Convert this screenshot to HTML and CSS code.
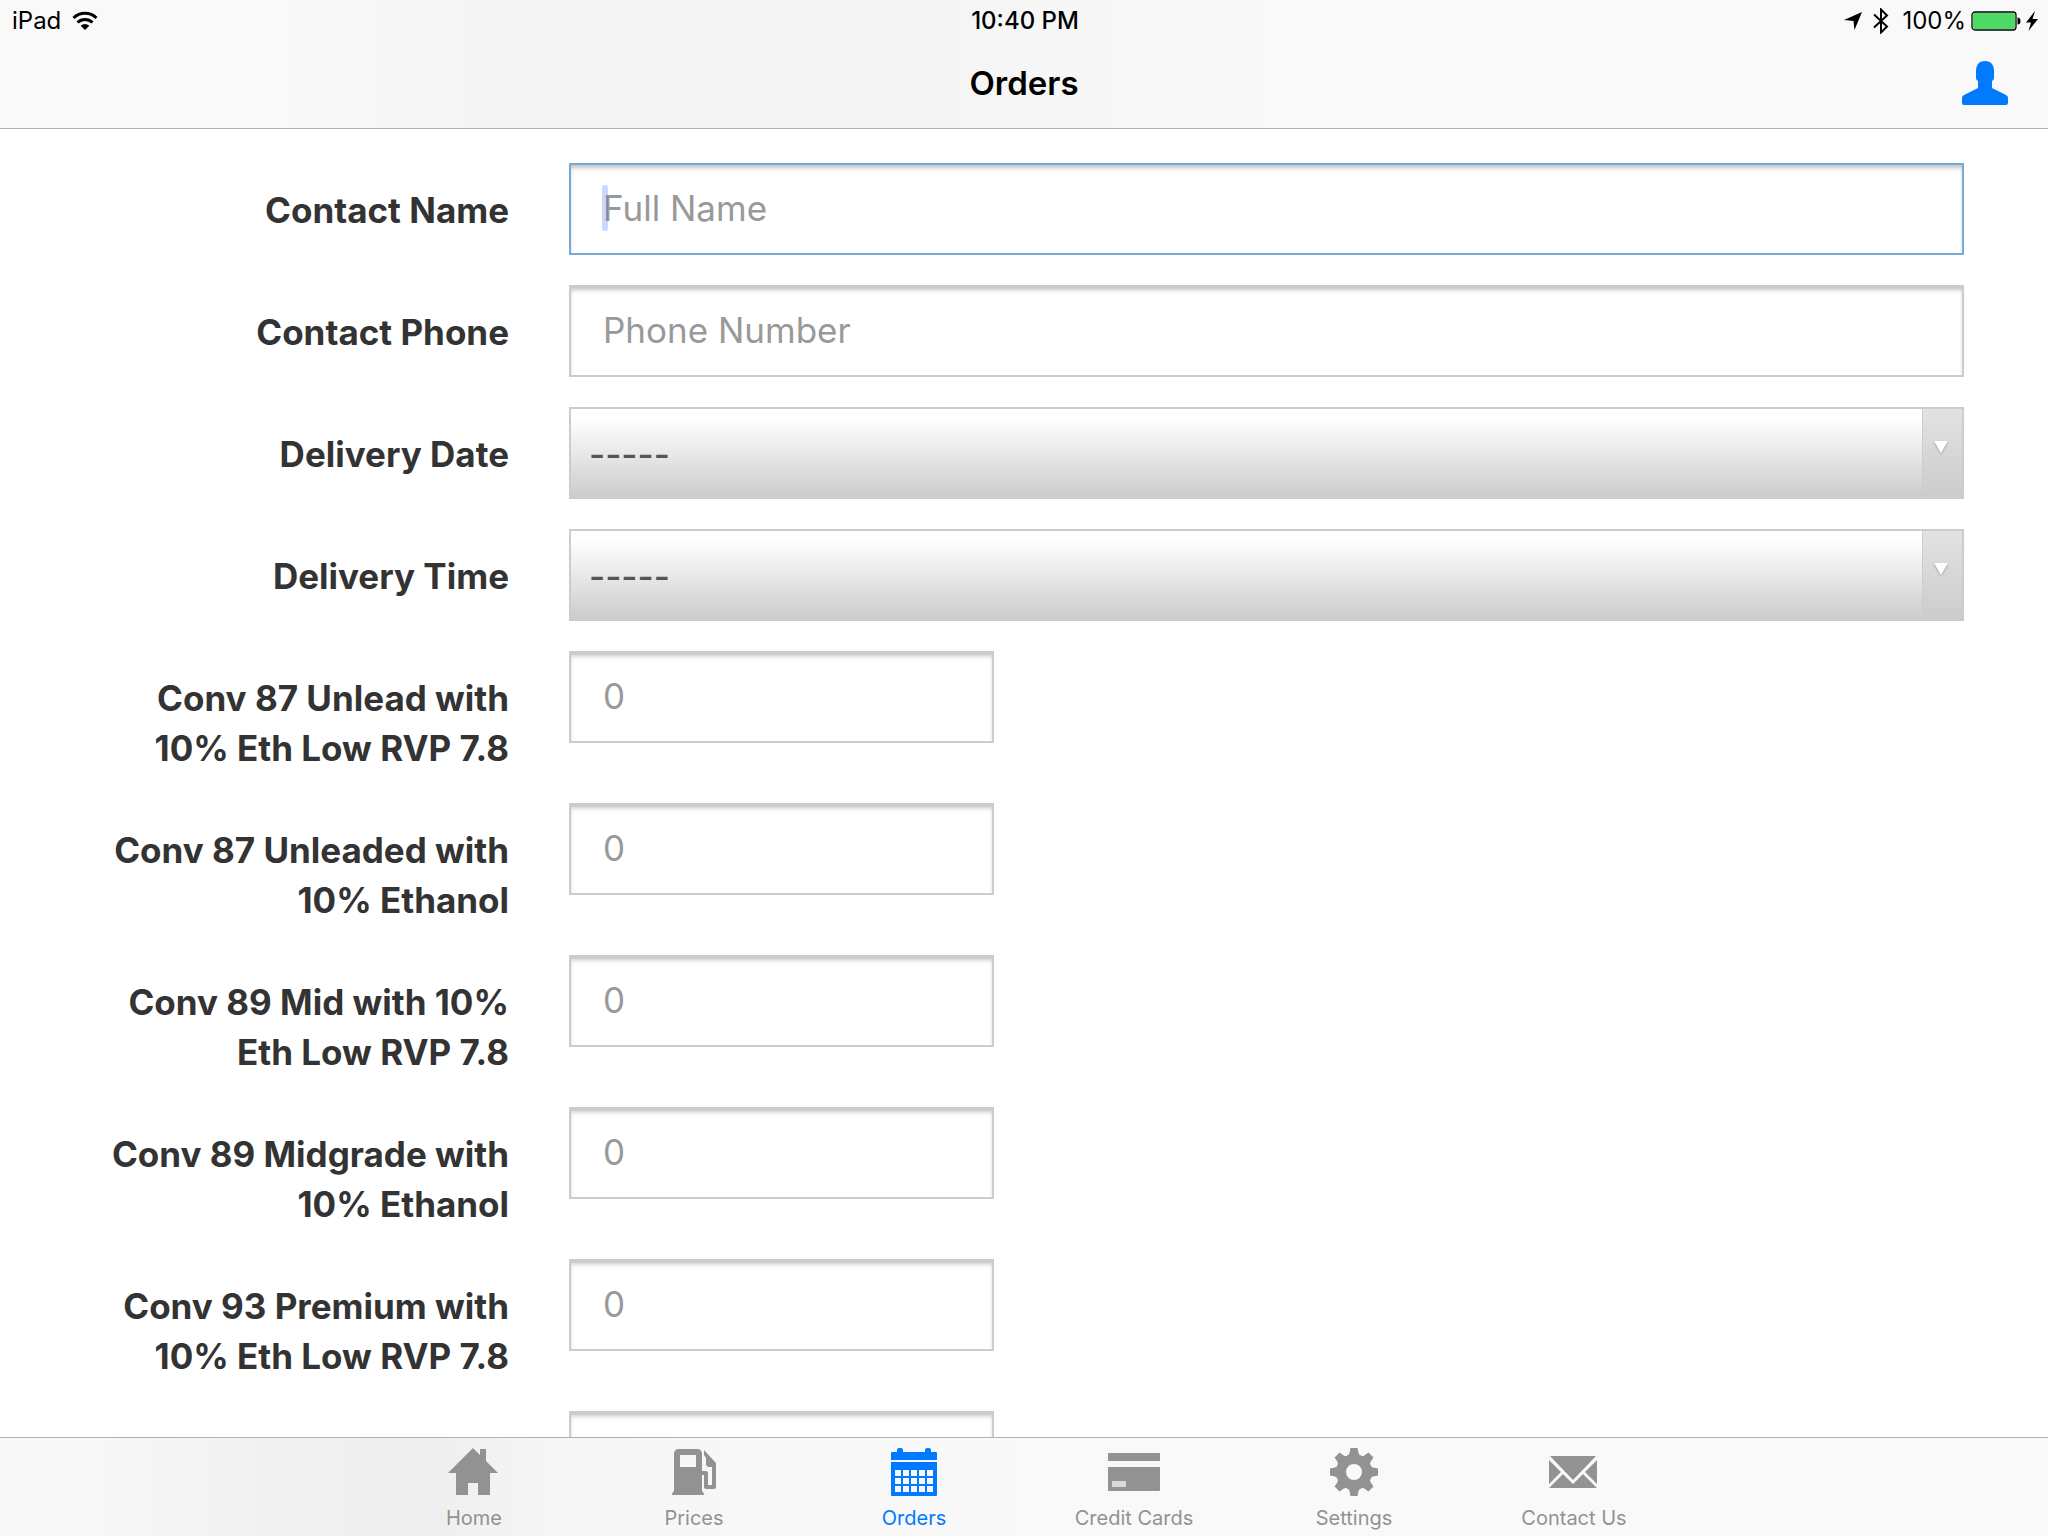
FILE: index.html
```html
<!DOCTYPE html>
<html lang="en">
<head>
    <meta charset="utf-8">
    <title>Orders</title>
    <link rel="stylesheet" href="styles.css">
</head>
<body>
    <header class="top-bar">
        <div class="status-bar">
            <div class="status-left">
                <span>iPad</span>
                <svg width="26" height="20" viewBox="0 0 26 20" fill="none" stroke="#000">
                    <path d="M1.5 7a16.5 16.5 0 0 1 23 0" stroke-width="3"/>
                    <path d="M5.5 11.5a11 11 0 0 1 15 0" stroke-width="3"/>
                    <path d="M13 19l-4.3-4.3a6.2 6.2 0 0 1 8.6 0z" fill="#000" stroke="none"/>
                </svg>
            </div>
            <div class="status-time">10:40 PM</div>
            <div class="status-right">
                <svg width="18" height="18" viewBox="0 0 18 18"><path d="M18 0L10.500 18L9.500 9L0 8z"/></svg>
                <svg width="16" height="26" viewBox="0 0 16 26" fill="none" stroke="#000" stroke-width="2"><path d="M1 6.500L14 18.500L8 24.500V1.500L14 7.500L1 19.500"/></svg>
                <span class="percent">100%</span>
                <svg width="50" height="20" viewBox="0 0 50 20">
                    <rect x="1" y="1" width="44" height="18" rx="3" fill="#fff" stroke="#000" stroke-width="1.300"/>
                    <rect x="2" y="2" width="42" height="16" rx="2" fill="#4cd964"/>
                    <path d="M46.500 6.500q3 0 3 3.500t-3 3.500z"/>
                </svg>
                <svg width="12" height="20" viewBox="0 0 12 20"><path d="M9 0L0 11.500H5L2.500 20L12 8H6.500z"/></svg>
            </div>
        </div>
        <div class="nav-bar">
            <h1>Orders</h1>
            <button class="profile" type="button" aria-label="Profile">
                <svg width="46" height="44" viewBox="0 0 46 44" fill="#007aff"><path d="M14 10C14 4 17 0 23 0S32 4 32 10V17Q32 19 30 20V27L44 34Q46 35 46 37V42Q46 44 44 44H2Q0 44 0 42V37Q0 35 2 34L16 27V20Q14 19 14 17z"/></svg>
            </button>
        </div>
    </header>

    <main class="content">
        <form class="order-form">
            <div class="form-row">
                <label for="contactName">Contact Name</label>
                <div class="field">
                    <input type="text" id="contactName" class="active" placeholder="Full Name">
                    <span class="caret"></span>
                </div>
            </div>
            <div class="form-row">
                <label for="contactPhone">Contact Phone</label>
                <div class="field">
                    <input type="tel" id="contactPhone" placeholder="Phone Number">
                </div>
            </div>
            <div class="form-row">
                <label for="deliveryDate">Delivery Date</label>
                <div class="field">
                    <select id="deliveryDate"><option>-----</option></select>
                    <span class="arrow"></span>
                </div>
            </div>
            <div class="form-row">
                <label for="deliveryTime">Delivery Time</label>
                <div class="field">
                    <select id="deliveryTime"><option>-----</option></select>
                    <span class="arrow"></span>
                </div>
            </div>
            <!-- Products -->
            <div class="form-row">
                <label for="product1">Conv 87 Unlead with 10% Eth Low RVP 7.8</label>
                <div class="field small"><input type="text" id="product1" placeholder="0"></div>
            </div>
            <div class="form-row">
                <label for="product2">Conv 87 Unleaded with 10% Ethanol</label>
                <div class="field small"><input type="text" id="product2" placeholder="0"></div>
            </div>
            <div class="form-row">
                <label for="product3">Conv 89 Mid with 10% Eth Low RVP 7.8</label>
                <div class="field small"><input type="text" id="product3" placeholder="0"></div>
            </div>
            <div class="form-row">
                <label for="product4">Conv 89 Midgrade with 10% Ethanol</label>
                <div class="field small"><input type="text" id="product4" placeholder="0"></div>
            </div>
            <div class="form-row">
                <label for="product5">Conv 93 Premium with 10% Eth Low RVP 7.8</label>
                <div class="field small"><input type="text" id="product5" placeholder="0"></div>
            </div>
            <div class="form-row">
                <div class="field small"><input type="text" id="product6" aria-label="Quantity"></div>
            </div>
        </form>
    </main>

    <nav class="tab-bar">
        <a href="#" class="tab">
            <svg width="52" height="48" viewBox="0 0 52 48"><path d="M25 0L32 7V1H38V13L50 25H42V47H30V35H20V47H8V25H0z"/></svg>
            <span>Home</span>
        </a>
        <a href="#" class="tab">
            <svg width="52" height="48" viewBox="0 0 52 48">
                <path fill-rule="evenodd" d="M6 6Q6 1 11 1H29Q34 1 34 6V43Q36 44 36 47H4Q4 44 6 43zM12 7V19H28V7z"/>
                <path d="M36 2L48 15V39Q48 41 46 41H38Q36 41 36 39V27H34V23H38Q40 23 40 25V37H44V19H40L38 17V10L36 7z"/>
            </svg>
            <span>Prices</span>
        </a>
        <a href="#" class="tab selected">
            <svg width="52" height="48" viewBox="0 0 52 48">
                <path d="M4 4H9V2Q9 0 11 0H13Q15 0 15 2V4H37V2Q37 0 39 0H41Q43 0 43 2V4H48Q49 4 49 5V12H3V5Q3 4 4 4z"/>
                <path fill-rule="evenodd" d="M3 14H49V47Q49 48 48 48H4Q3 48 3 47zM7 22v6h6v-6zM15 22v6h6v-6zM23 22v6h6v-6zM31 22v6h6v-6zM39 22v6h6v-6zM7 30v6h6v-6zM15 30v6h6v-6zM23 30v6h6v-6zM31 30v6h6v-6zM39 30v6h6v-6zM7 38v6h6v-6zM15 38v6h6v-6zM23 38v6h6v-6zM31 38v6h6v-6zM39 38v6h6v-6z"/>
            </svg>
            <span>Orders</span>
        </a>
        <a href="#" class="tab">
            <svg width="52" height="48" viewBox="0 0 52 48">
                <path d="M0 6Q0 5 1 5H51Q52 5 52 6V13H0zM0 19H52V42Q52 43 51 43H1Q0 43 0 42z"/>
                <rect x="4" y="33" width="14" height="6" fill="#dadada"/>
            </svg>
            <span>Credit Cards</span>
        </a>
        <a href="#" class="tab">
            <svg width="52" height="48" viewBox="0 0 52 48">
                <defs>
                    <path id="tooth" d="M22.500 0H29.500L30.500 5Q31 7 33 7.500V14H19V7.500Q21 7 21.500 5z"/>
                </defs>
                <circle cx="26" cy="24" r="12.500" fill="none" stroke="#929292" stroke-width="9"/>
                <use href="#tooth"/>
                <use href="#tooth" transform="rotate(45 26 24)"/>
                <use href="#tooth" transform="rotate(90 26 24)"/>
                <use href="#tooth" transform="rotate(135 26 24)"/>
                <use href="#tooth" transform="rotate(180 26 24)"/>
                <use href="#tooth" transform="rotate(225 26 24)"/>
                <use href="#tooth" transform="rotate(270 26 24)"/>
                <use href="#tooth" transform="rotate(315 26 24)"/>
            </svg>
            <span>Settings</span>
        </a>
        <a href="#" class="tab">
            <svg width="52" height="48" viewBox="0 0 52 48"><path d="M2 8H48L25 32zM1 12L13 24L1 36zM49 12L37 24L49 36zM15 26L25 36L35 26L49 40H1z"/></svg>
            <span>Contact Us</span>
        </a>
    </nav>
</body>
</html>
```
FILE: styles.css
```css
* {
    box-sizing: border-box;
}
body {
    margin: 0;
    height: 100vh;
    display: flex;
    flex-direction: column;
    font-family: Inter, "Liberation Sans", sans-serif;
    background-color: #fff;
    color: #333;
}
svg {
    display: block;
    flex-shrink: 0;
}

/* Header */
.top-bar {
    background: linear-gradient(90deg, #f9f9f9 14%, #f5f5f5 23%, #f5f5f5 46%, #f9f9f9 62%);
    border-bottom: 1px solid #b2b2b2;
    color: #000;
}
.status-bar {
    display: grid;
    grid-template-columns: 1fr auto 1fr;
    align-items: center;
    height: 41px;
    padding: 0 10px 0 12px;
    font-size: 24px;
}
.status-left {
    display: flex;
    align-items: center;
    gap: 11px;
}
.status-time {
    font-weight: 500;
}
.status-right {
    display: flex;
    align-items: center;
    justify-content: flex-end;
    gap: 5px;
}
.status-right svg:first-child {
    margin-right: 6px;
}
.status-right .percent {
    margin-left: 8px;
}
.nav-bar {
    display: grid;
    grid-template-columns: 1fr auto 1fr;
    align-items: center;
    height: 87px;
    padding: 0 40px 4px;
}
.nav-bar h1 {
    grid-column: 2;
    margin: 0;
    font-size: 33px;
    font-weight: 600;
}
.profile {
    justify-self: end;
    padding: 0;
    background: none;
    border: none;
    cursor: pointer;
}

/* Order form */
.content {
    flex: 1;
    min-height: 0;
    overflow: hidden;
    padding: 34px 84px 0;
}
.form-row {
    display: grid;
    grid-template-columns: repeat(4, 1fr);
    column-gap: 60px;
    align-items: start;
    margin-bottom: 30px;
}
.form-row label {
    padding-top: 22px;
    font-size: 35px;
    font-weight: bold;
    line-height: 50px;
    text-align: right;
}
.field {
    position: relative;
    grid-column: 2 / span 3;
}
.field.small {
    grid-column: 2;
}
input,
select {
    display: block;
    width: 100%;
    height: 92px;
    border: 2px solid #ccc;
    border-radius: 0;
    font-family: inherit;
    font-size: 35px;
    outline: none;
}
input {
    padding: 0 32px 2px;
    background-color: #fff;
    box-shadow: inset 0 4px 4px -1px #c4c4c4;
}
input.active {
    border-color: #77aad4;
}
input::placeholder {
    color: #999;
    opacity: 1;
}
select {
    appearance: none;
    padding: 2px 60px 0 18px;
    background: linear-gradient(#fff 10%, #ccc);
    color: #555;
    font-weight: 500;
}
.caret {
    position: absolute;
    top: 22px;
    left: 33px;
    width: 6px;
    height: 46px;
    border-radius: 2px;
    background-color: rgba(65, 90, 240, 0.25);
    pointer-events: none;
}
.arrow {
    position: absolute;
    top: 2px;
    right: 2px;
    bottom: 2px;
    width: 40px;
    padding: 32px 0 0 11px;
    border-left: 1px solid #ccc;
    background: linear-gradient(#e2e2e2, #ccc);
    pointer-events: none;
}
.arrow::after {
    content: "";
    display: block;
    width: 0;
    border: 7px solid transparent;
    border-top: 12px solid #fff;
    border-bottom: none;
    filter: drop-shadow(0 1px 1px #999);
}

/* Tabs */
.tab-bar {
    display: flex;
    justify-content: center;
    height: 99px;
    padding-top: 10px;
    background: linear-gradient(90deg, #f8f8f8 4%, #f1f1f1 13%, #eee 21%, #f6f6f6 27%, #f9f9f9 50%);
    border-top: 1px solid #b2b2b2;
}
.tab {
    display: flex;
    flex-direction: column;
    align-items: center;
    gap: 10px;
    width: 220px;
    color: #929292;
    fill: #929292;
    font-size: 20px;
    line-height: 24px;
    text-decoration: none;
}
.tab.selected {
    color: #007aff;
    fill: #007aff;
}
```
